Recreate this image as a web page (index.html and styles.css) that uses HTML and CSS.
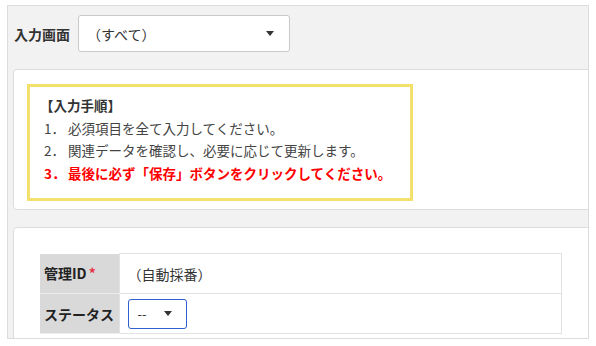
FILE: index.html
```html
<!DOCTYPE html>
<html lang="ja">
<head>
    <meta charset="UTF-8">
    <title>入力画面</title>
    <link rel="stylesheet" href="styles.css">
</head>
<body>
    <div class="panel">
        <div class="filter-row">
            <span class="filter-label">入力画面</span>
            <div class="select-box">
                <span>（すべて）</span>
                <span class="caret"></span>
            </div>
        </div>

        <div class="card card-guide">
            <div class="guide-box">
                <div class="guide-title">【入力手順】</div>
                <div class="guide-step"><span class="num">1．</span>必須項目を全て入力してください。</div>
                <div class="guide-step"><span class="num">2．</span>関連データを確認し、必要に応じて更新します。</div>
                <div class="guide-step guide-alert"><span class="num">3．</span>最後に必ず「保存」ボタンをクリックしてください。</div>
            </div>
        </div>

        <div class="card card-form">
            <table class="form-table">
                <tr>
                    <th>管理ID<span class="required">*</span></th>
                    <td>（自動採番）</td>
                </tr>
                <tr>
                    <th>ステータス</th>
                    <td>
                        <div class="status-select">
                            <span>--</span>
                            <span class="caret"></span>
                        </div>
                    </td>
                </tr>
            </table>
        </div>
    </div>
</body>
</html>
```

FILE: styles.css
```css
body {
    margin: 0;
    background-color: #ffffff;
    font-family: 'Noto Sans CJK JP', 'Noto Sans', sans-serif;
    color: #333333;
    font-size: 13.5px;
}

.panel {
    margin: 5px 7px 0 7px;
    height: 334px;
    border: 1px solid #dcdcdc;
    background-color: #f2f2f2;
    padding: 9px 0 0 5px;
    box-sizing: border-box;
    overflow: hidden;
}

/* top filter */
.filter-row {
    display: flex;
    align-items: center;
    gap: 8px;
    height: 37px;
}

.filter-label {
    font-weight: bold;
    font-size: 14px;
    color: #333;
    padding-left: 1px;
}

.select-box {
    width: 212px;
    height: 37px;
    box-sizing: border-box;
    background-color: #ffffff;
    border: 1px solid #c9c9c9;
    border-radius: 3px;
    display: flex;
    align-items: center;
    justify-content: space-between;
    padding: 0 15px 0 8px;
    font-size: 14px;
    color: #333;
}

.caret {
    width: 0;
    height: 0;
    border-left: 4px solid transparent;
    border-right: 4px solid transparent;
    border-top: 5px solid #333;
}

/* cards */
.card {
    background-color: #ffffff;
    border: 1px solid #dddddd;
    border-radius: 4px;
    margin-right: -10px;
}

.card-guide {
    margin-top: 17px;
    height: 141px;
    box-sizing: border-box;
    padding: 14px 0 0 13px;
}

.guide-box {
    width: 386px;
    height: 117px;
    box-sizing: border-box;
    border: 3px solid #f4e16d;
    padding: 7px 0 0 10px;
    line-height: 22.5px;
    color: #444;
}

.guide-title {
    font-weight: bold;
    color: #333;
}

.guide-step {
    display: flex;
}

.guide-step .num {
    width: 24px;
    padding-left: 4px;
    flex-shrink: 0;
}

.guide-alert {
    color: #ff0000;
    font-weight: bold;
}

.card-form {
    margin-top: 17px;
    height: 200px;
    padding: 25px 0 0 26px;
}

/* form table */
.form-table {
    border-collapse: collapse;
    width: 522px;
}

.form-table th {
    width: 79px;
    height: 39px;
    background-color: #d9d9d9;
    border-bottom: 1px solid #ececec;
    text-align: left;
    padding: 0 0 0 4px;
    font-size: 14px;
    font-weight: bold;
    color: #222;
    box-sizing: border-box;
}

.form-table td {
    border: 1px solid #e2e2e2;
    padding: 0 0 0 8px;
    height: 39px;
    font-size: 14px;
    color: #333;
}

.required {
    color: #e8334a;
    margin-left: 2px;
}

.status-select {
    width: 59px;
    height: 30px;
    box-sizing: border-box;
    border: 1.5px solid #2f5fd0;
    border-radius: 3px;
    display: flex;
    align-items: center;
    justify-content: space-between;
    padding: 0 14px 0 9px;
    font-size: 13px;
}
```
